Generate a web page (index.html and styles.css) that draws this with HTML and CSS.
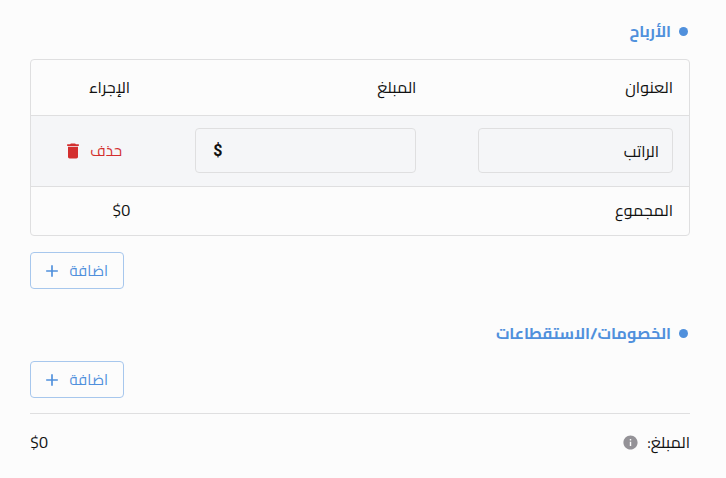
FILE: index.html
```html
<!DOCTYPE html>
<html lang="ar" dir="rtl">
<head>
  <meta charset="UTF-8">
  <meta name="viewport" content="width=device-width, initial-scale=1.0">
  <title>الأرباح</title>
  <link rel="stylesheet" href="styles.css">
</head>
<body>
  <main>
    <section class="earnings">
      <h2 class="section-title">الأرباح</h2>
      <div class="table-box">
        <table>
          <thead>
            <tr>
              <th class="col-title">العنوان</th>
              <th class="col-amount">المبلغ</th>
              <th class="col-action">الإجراء</th>
            </tr>
          </thead>
          <tbody>
            <tr class="edit-row">
              <td>
                <div class="field"><input type="text" value="الراتب" aria-label="العنوان"></div>
              </td>
              <td>
                <div class="field">
                  <input type="text" aria-label="المبلغ">
                  <span class="currency">$</span>
                </div>
              </td>
              <td>
                <button type="button" class="delete-btn">
                  حذف
                  <svg viewBox="0 0 24 24"><path d="M6 19c0 1.100.9 2 2 2h8c1.100 0 2-.9 2-2V7H6v12zM19 4h-3.500l-1-1h-5l-1 1H5v2h14V4z"/></svg>
                </button>
              </td>
            </tr>
            <tr class="total-row">
              <td colspan="2">المجموع</td>
              <td><span dir="ltr">$0</span></td>
            </tr>
          </tbody>
        </table>
      </div>
      <button type="button" class="add-btn">
        اضافة
        <svg viewBox="0 0 24 24"><path d="M19 13h-6v6h-2v-6H5v-2h6V5h2v6h6v2z"/></svg>
      </button>
    </section>

    <section class="deductions">
      <h2 class="section-title">الخصومات/الاستقطاعات</h2>
      <button type="button" class="add-btn">
        اضافة
        <svg viewBox="0 0 24 24"><path d="M19 13h-6v6h-2v-6H5v-2h6V5h2v6h6v2z"/></svg>
      </button>
    </section>

    <footer class="summary">
      <span class="summary-label">
        المبلغ:
        <svg viewBox="0 0 24 24"><path d="M12 2C6.480 2 2 6.480 2 12s4.480 10 10 10 10-4.480 10-10S17.520 2 12 2zm1 15h-2v-6h2v6zm0-8h-2V7h2v2z"/></svg>
      </span>
      <span dir="ltr">$0</span>
    </footer>
  </main>
</body>
</html>
```

FILE: styles.css
```css
* {
  box-sizing: border-box;
}

body {
  margin: 0;
  background: #fcfcfc;
  color: #111;
  font-family: Cairo, "Open Sans", "DejaVu Sans", sans-serif;
  font-size: 16px;
  line-height: 24px;
}

main {
  padding: 19px 36px 20px 30px;
}

svg {
  display: block;
  flex: none;
  width: 20px;
  height: 20px;
  fill: currentColor;
}

button,
input {
  font: inherit;
}

.section-title {
  display: flex;
  align-items: center;
  gap: 8px;
  margin: 0;
  padding-right: 2px;
  color: #5090dc;
  font-size: 16px;
  font-weight: 700;
}

.section-title::before {
  content: "";
  width: 9px;
  height: 9px;
  border-radius: 50%;
  background: #5090dc;
}

/* Earnings table */
.table-box {
  margin: 16px 0;
  border: 1px solid #dfdfe0;
  border-radius: 4px;
  overflow: hidden;
}

table {
  width: 100%;
  table-layout: fixed;
  border-collapse: separate;
  border-spacing: 0;
}

th,
td {
  padding: 11px 16px 13px;
  text-align: right;
  font-weight: 400;
}

th {
  height: 56px;
  border-bottom: 1px solid #dfdfe0;
}

.col-title {
  width: 39%;
}

.col-amount {
  width: 43.5%;
}

.col-action {
  width: 17.5%;
}

.edit-row {
  background: #f5f6f8;
}

.edit-row td {
  padding-top: 12px;
  border-bottom: 1px solid #dfdfe0;
}

.field {
  display: flex;
  align-items: center;
  width: 87%;
  height: 45px;
  padding: 0 13px;
  border: 1px solid #dfdfe0;
  border-radius: 4px;
}

.field input {
  flex: 1;
  min-width: 0;
  padding: 0;
  border: none;
  outline: none;
  background: none;
  color: inherit;
}

.currency {
  padding: 0 4px;
  font-family: Roboto, sans-serif;
  font-weight: 700;
}

.delete-btn {
  display: flex;
  align-items: center;
  gap: 7px;
  padding: 0 8px;
  border: none;
  background: none;
  color: #d32f2f;
  font-size: 15px;
  cursor: pointer;
}

/* Buttons */
.add-btn {
  display: flex;
  align-items: center;
  justify-content: space-between;
  gap: 7px;
  min-width: 94px;
  height: 37px;
  margin-right: auto;
  padding: 0 15px 0 11px;
  border: 1px solid #a7c7ed;
  border-radius: 4px;
  background: none;
  color: #5090dc;
  font-size: 15px;
  cursor: pointer;
}

.deductions {
  margin-top: 32px;
}

.deductions .add-btn {
  margin-top: 16px;
}

/* Total */
.summary {
  display: flex;
  justify-content: space-between;
  margin-top: 15px;
  padding-top: 16px;
  border-top: 1px solid #dfdfe0;
}

.summary-label {
  display: flex;
  align-items: center;
  gap: 8px;
}

.summary-label svg {
  width: 17px;
  height: 17px;
  color: #949297;
}
```
